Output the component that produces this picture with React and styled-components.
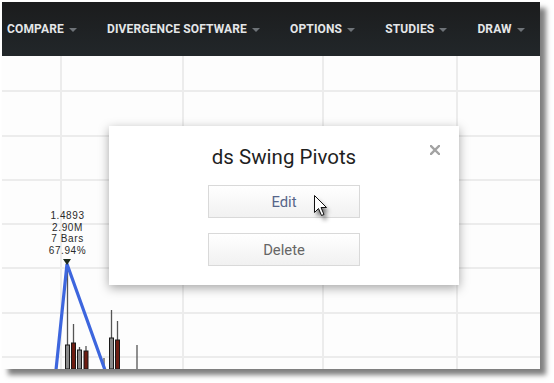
import React from "react";
import styled, { createGlobalStyle } from "styled-components";

const Global = createGlobalStyle`
  html, body { margin: 0; padding: 0; background: #fff; }
  body { font-family: Roboto, "Liberation Sans", Arial, sans-serif; }
`;

const Page = styled.div`
  width: 554px;
  height: 383px;
  padding: 2px 0 0 2px;
  box-sizing: border-box;
  background: #fff;
`;

const Window = styled.div`
  position: relative;
  width: 538px;
  height: 367px;
  display: flex;
  flex-direction: column;
  background: #fdfdfd;
  box-shadow: 6px 6px 5px rgba(0, 0, 0, 0.5);
`;

const NavBar = styled.div`
  height: 54px;
  flex: none;
  display: flex;
  align-items: center;
  padding-left: 5px;
  background: linear-gradient(#1b1c1d, #22272a);
`;

const NavItem = styled.div`
  display: flex;
  align-items: center;
  gap: 5px;
  margin-right: ${(p) => p.$gap}px;
  color: #e4e6e8;
  font-family: Roboto, "Liberation Sans", Arial, sans-serif;
  font-weight: 700;
  font-size: 12px;
  letter-spacing: 0.15px;
  white-space: nowrap;
`;

const Caret = styled.span`
  width: 0;
  height: 0;
  border-left: 4.5px solid transparent;
  border-right: 4.5px solid transparent;
  border-top: 4px solid #6e7378;
  margin-top: 1px;
`;

const ChartArea = styled.div`
  flex: 1;
  position: relative;
  overflow: hidden;
`;

const ChartSvg = styled.svg`
  display: block;
  width: 538px;
  height: 313px;
`;

const Modal = styled.div`
  position: absolute;
  left: 107px;
  top: 124px;
  width: 350px;
  height: 159px;
  box-sizing: border-box;
  background: #fff;
  box-shadow: 0 3px 10px rgba(0, 0, 0, 0.35);
  display: flex;
  flex-direction: column;
  align-items: center;
  padding-top: 19px;
`;

const Title = styled.div`
  font-family: Roboto, "Liberation Sans", Arial, sans-serif;
  font-size: 20.5px;
  line-height: 24px;
  color: #1f1f1f;
  margin-bottom: 16px;
`;

const Button = styled.div`
  width: 152px;
  height: 33px;
  box-sizing: border-box;
  border: 1px solid #d9d9d9;
  background: linear-gradient(#ffffff, #f1f1f1);
  display: flex;
  align-items: center;
  justify-content: center;
  font-family: Roboto, "Liberation Sans", Arial, sans-serif;
  font-size: 14.8px;
  color: ${(p) => (p.$hover ? "#56658a" : "#666")};
  margin-bottom: 15px;
`;

const Close = styled.svg`
  position: absolute;
  right: 19px;
  top: 19px;
  width: 10px;
  height: 10px;
`;

const Cursor = styled.svg`
  position: absolute;
  left: 311px;
  top: 192px;
  width: 24px;
  height: 30px;
  overflow: visible;
`;

const navItems = [
  { label: "COMPARE", gap: 30 },
  { label: "DIVERGENCE SOFTWARE", gap: 30 },
  { label: "OPTIONS", gap: 30 },
  { label: "STUDIES", gap: 30 },
  { label: "DRAW", gap: 0 },
];

const hLines = [35, 80, 124, 168, 212, 257, 301];
const vLines = [59, 181, 321, 455];

const candles = [
  { x: 65.5, wick: 207, body: 289, red: false },
  { x: 71.5, wick: 268, body: 287, red: true },
  { x: 77.5, wick: 291, body: 294, red: false },
  { x: 84, wick: 290, body: 295, red: true },
  { x: 102, wick: 302, body: null, red: false },
  { x: 109.5, wick: 254, body: 282, red: false },
  { x: 115.5, wick: 265, body: 284, red: true },
  { x: 135, wick: 289, body: null, red: false },
];

function Chart() {
  return (
    <ChartSvg viewBox="0 0 538 313">
      {hLines.map((y) => (
        <line key={"h" + y} x1="0" x2="538" y1={y} y2={y} stroke="#ececec" strokeWidth="2" />
      ))}
      {vLines.map((x) => (
        <line key={"v" + x} x1={x} x2={x} y1="0" y2="313" stroke="#ececec" strokeWidth="2" />
      ))}
      {candles.map((c, i) => (
        <g key={i}>
          <line x1={c.x} x2={c.x} y1={c.wick} y2="313" stroke="#555" strokeWidth="1.3" />
          {c.body !== null && (
            <rect
              x={c.x - 2}
              y={c.body}
              width="4"
              height={313 - c.body}
              fill={c.red ? "#6e1d12" : "#8a8a8a"}
              stroke="#1a1a1a"
              strokeWidth="1"
            />
          )}
        </g>
      ))}
      <polyline points="54,314 65,208 103,314" fill="none" stroke="#3d66de" strokeWidth="3.2" strokeLinejoin="miter" />
      <polygon points="61,203 69,203 65,209" fill="#1d2b1d" />
      <g
        fontFamily="'Liberation Sans', Arial, sans-serif"
        fontSize="10"
        letterSpacing="0.6"
        fill="#2a2a2a"
        textAnchor="middle"
      >
        <text x="65.5" y="163">1.4893</text>
        <text x="65.5" y="174.5">2.90M</text>
        <text x="65.5" y="186">7 Bars</text>
        <text x="65.5" y="198">67.94%</text>
      </g>
    </ChartSvg>
  );
}

export default function App() {
  return (
    <Page>
      <Global />
      <Window>
        <NavBar>
          {navItems.map((n) => (
            <NavItem key={n.label} $gap={n.gap}>
              {n.label}
              <Caret />
            </NavItem>
          ))}
        </NavBar>
        <ChartArea>
          <Chart />
        </ChartArea>
        <Modal>
          <Close viewBox="0 0 10 10">
            <path d="M1 1 L9 9 M9 1 L1 9" stroke="#a3a3a3" strokeWidth="2.4" strokeLinecap="square" />
          </Close>
          <Title>ds Swing Pivots</Title>
          <Button $hover>Edit</Button>
          <Button>Delete</Button>
        </Modal>
        <Cursor viewBox="0 0 24 30">
          <defs>
            <filter id="cs" x="-50%" y="-50%" width="200%" height="200%">
              <feGaussianBlur stdDeviation="2" />
            </filter>
          </defs>
          <path
            d="M4 6 L4 23 L8 19 L11 26 L14 25 L11 18 L16 18 Z"
            fill="rgba(0,0,0,0.55)"
            filter="url(#cs)"
          />
          <path
            d="M1.5 1.5 L1.5 18.5 L5.5 14.5 L8.5 21.5 L11 20.5 L8 13.5 L13.5 13.5 Z"
            fill="#fff"
            stroke="#111"
            strokeWidth="1"
            strokeLinejoin="miter"
          />
        </Cursor>
      </Window>
    </Page>
  );
}
